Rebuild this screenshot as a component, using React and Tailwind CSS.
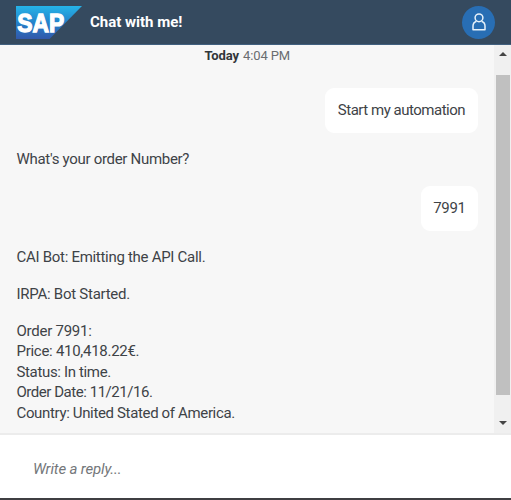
const details = [
  { text: 'Order 7991:', tracking: 'tracking-[-0.25px]' },
  { text: 'Price: 410,418.22€.', tracking: 'tracking-[-0.28px]' },
  { text: 'Status: In time.', tracking: 'tracking-[-0.35px]' },
  { text: 'Order Date: 11/21/16.', tracking: 'tracking-[-0.46px]' },
  { text: 'Country: United Stated of America.', tracking: 'tracking-[-0.35px]' },
];

function SapLogo() {
  return (
    <svg className="h-[33px] w-[66px] shrink-0" viewBox="0 0 66 33" aria-label="SAP">
      <defs>
        <linearGradient id="sap" x1="0" y1="0" x2="0" y2="1">
          <stop offset="0" stopColor="#25b4e8" />
          <stop offset="0.5" stopColor="#2583cb" />
          <stop offset="1" stopColor="#3158aa" />
        </linearGradient>
      </defs>
      <path d="M0 0h66L33.5 33H0z" fill="url(#sap)" />
      <text x="1.2" y="25.5" fill="#fff" stroke="#fff" strokeWidth="1.3" textLength="47" lengthAdjust="spacingAndGlyphs" className="font-['Liberation_Sans',sans-serif] text-[26px] font-bold">SAP</text>
    </svg>
  );
}

function UserAvatar() {
  return (
    <div className="flex size-[33px] items-center justify-center rounded-full bg-[#286eb4]">
      <svg className="h-[18px] w-[14px]" viewBox="0 0 14 18" fill="none" stroke="#e6f1fa" strokeWidth="1.5">
        <circle cx="7" cy="4.8" r="3.9" />
        <path d="M4.4 8.2C2.3 9 1 10.7 1 13v3.7h12V13c0-2.3-1.3-4-3.4-4.8" strokeLinejoin="round" />
      </svg>
    </div>
  );
}

function Bubble({ children, className }) {
  return (
    <div className={`flex h-[45px] items-center justify-center self-end rounded-[9px] bg-white ${className}`}>
      {children}
    </div>
  );
}

function Scrollbar() {
  return (
    <div className="flex w-[17px] shrink-0 flex-col items-center bg-[#f0f0f0]">
      <svg className="mt-[7px] h-[4px] w-[8px]" viewBox="0 0 8 4"><path d="M0 4L4 0l4 4z" fill="#454545" /></svg>
      <div className="mt-[19px] h-[320px] w-[14px] bg-[#c0c0c0]" />
      <svg className="mt-[26px] h-[4px] w-[8px]" viewBox="0 0 8 4"><path d="M0 0h8L4 4z" fill="#454545" /></svg>
    </div>
  );
}

export default function App() {
  return (
    <div className="flex h-[500px] w-[511px] flex-col overflow-hidden bg-white font-[Roboto,sans-serif] text-[15px] leading-[20.5px] text-[#3e4347]">
      <header className="flex h-[45px] shrink-0 items-center border-b border-[#41607f] bg-[#354a5f] pr-[16px] pl-[16px]">
        <SapLogo />
        <h1 className="ml-[8px] flex-1 text-[15px] font-bold text-white">Chat with me!</h1>
        <UserAvatar />
      </header>
      <div className="flex h-[388px] shrink-0">
        <main className="flex min-w-0 flex-1 flex-col bg-[#f7f7f7] pr-[16px] pl-[16.5px]">
          <div className="flex h-[22px] items-center justify-center gap-[4px] text-[13px] tracking-[-0.1px] text-[#6a6d70]">
            <strong className="font-bold text-[#32363a]">Today</strong>
            <span>4:04 PM</span>
          </div>
          <Bubble className="mt-[21px] w-[153px] tracking-[-0.48px]">Start my automation</Bubble>
          <p className="mt-[16px] tracking-[-0.3px]">What's your order Number?</p>
          <Bubble className="mt-[16.5px] w-[57px] tracking-[-0.3px]">7991</Bubble>
          <p className="mt-[16px] tracking-[-0.29px]">CAI Bot: Emitting the API Call.</p>
          <p className="mt-[16.5px] tracking-[-0.26px]">IRPA: Bot Started.</p>
          <div className="mt-[16px]">
            {details.map((line) => (
              <p key={line.text} className={line.tracking}>{line.text}</p>
            ))}
          </div>
        </main>
        <Scrollbar />
      </div>
      <footer className="flex flex-1 items-center border-t-2 border-b-2 border-t-[#ececec] border-b-[#3f3f42] pt-[5px] pl-[33px]">
        <span className="tracking-[-0.15px] text-[#74777a] italic">Write a reply...</span>
      </footer>
    </div>
  );
}
